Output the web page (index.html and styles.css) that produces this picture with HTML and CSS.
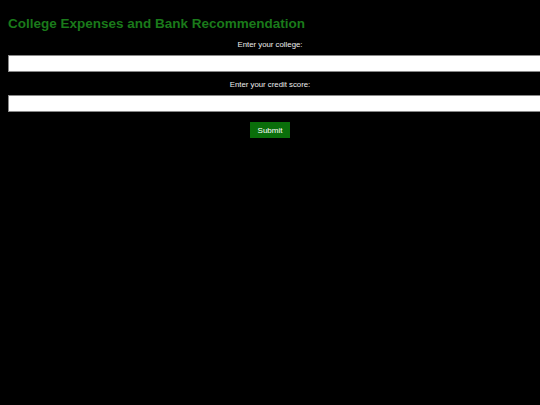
FILE: index.html
```html
<!DOCTYPE html>
<html>
<head>
<meta charset="utf-8">
<link rel="stylesheet" href="styles.css">
</head>
<body>
<h1 class="title">College Expenses and Bank Recommendation</h1>
<form class="form">
  <label class="label" for="college">Enter your college:</label>
  <div class="field-wrap"><input class="field" type="text" id="college"></div>
  <label class="label" for="score">Enter your credit score:</label>
  <div class="field-wrap"><input class="field" type="text" id="score"></div>
  <button class="submit" type="button">Submit</button>
</form>
</body>
</html>
```
FILE: styles.css
```css
html {
  background: #000;
}
body {
  margin: 8px;
  font-family: "Liberation Sans", Arial, sans-serif;
  color: #fff;
  overflow-x: hidden;
  margin-right: 0;
}
.title {
  color: #1a7a1a;
  font-size: 13.5px;
  font-weight: bold;
  margin: 8px 0 8px;
  line-height: 16px;
}
.form {
  text-align: center;
  padding-right: 8px;
  font-size: 8px;
}
.label {
  display: block;
  font-size: 7.8px;
  line-height: 10px;
  margin-bottom: 5px;
  color: #eee;
}
.field-wrap {
  margin: 0 -8px 8px 0;
}
.field {
  display: block;
  height: 17px;
  box-sizing: border-box;
  width: calc(100% + 8px);
  margin: 0;
  border: 1px solid #888;
  background: #fff;
  padding: 0 4px;
}
.submit {
  vertical-align: top;
  margin-top: 2px;
  background: #0a6e0a;
  color: #fff;
  border: none;
  font-family: "Liberation Sans", Arial, sans-serif;
  font-size: 8px;
  width: 40px;
  height: 16px;
  padding: 0;
}
```
